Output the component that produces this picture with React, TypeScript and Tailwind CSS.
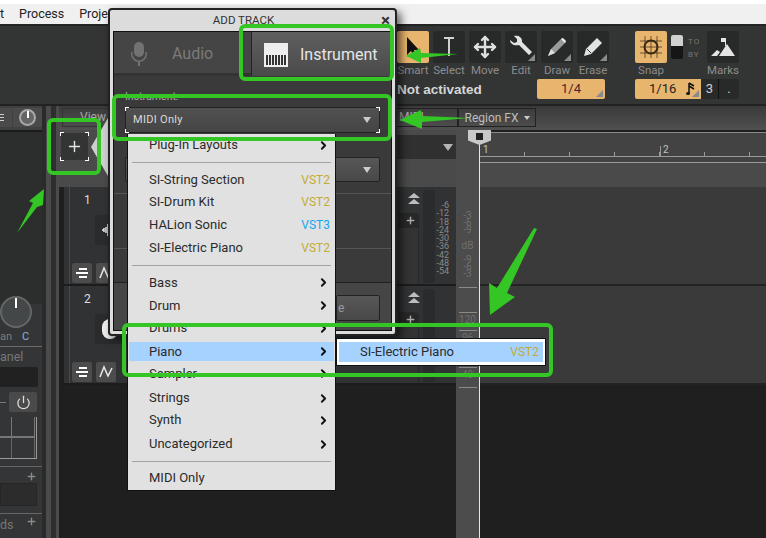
import { ChevronRight, Move, Plus, Power } from 'lucide-react';

const toolButtons = [
  { label: 'Select', icon: <svg width="18" height="24" viewBox="0 0 18 24"><path d="M4 3h10M9 3v18" stroke="#d0d0d0" strokeWidth="2" fill="none" /></svg> },
  { label: 'Move', icon: <Move size={24} color="#e0e0e0" strokeWidth={2.4} /> },
  {
    label: 'Edit',
    icon: <svg width="26" height="26" viewBox="0 0 26 26"><path d="M2 6l4 3 3-1 0-3-3-3c4-1 8 1 8 5l0 1 10 10-3 3-10-10c-5 1-9-1-9-5z" fill="#e2e2e2" /></svg>,
    corner: true,
  },
  {
    label: 'Draw',
    icon: <svg width="24" height="24" viewBox="0 0 24 24"><path d="M3 21l3-7L17 3l4 4L10 18z" fill="#9a9a9a" /><path d="M16 4l4 4 1-2-3-3z" fill="#eeeeee" /><path d="M3 21l3-7 4 4z" fill="#dddddd" /></svg>,
    corner: true,
  },
  {
    label: 'Erase',
    icon: <svg width="24" height="24" viewBox="0 0 24 24"><path d="M3 21l2-7L16 3l5 5L10 19z" fill="#e2e2e2" /><path d="M6 14l4 4" stroke="#333333" strokeWidth="1" /></svg>,
    corner: true,
  },
];

// the heights differ a bit from row to row in the picture
const menuRows = [
  { kind: 'item', text: 'Plug-In Layouts', arrow: true, cls: 'h-[22px]' },
  { kind: 'sep', cls: 'h-[13px]' },
  { kind: 'item', text: 'SI-String Section', tag: 'VST2', cls: 'h-[22px]' },
  { kind: 'item', text: 'SI-Drum Kit', tag: 'VST2', cls: 'h-[22px]' },
  { kind: 'item', text: 'HALion Sonic', tag: 'VST3', cls: 'h-[24px]' },
  { kind: 'item', text: 'SI-Electric Piano', tag: 'VST2', cls: 'h-[22px]' },
  { kind: 'sep', cls: 'h-[12px]' },
  { kind: 'item', text: 'Bass', arrow: true, cls: 'h-[23px]' },
  { kind: 'item', text: 'Drum', arrow: true, cls: 'h-[23px]' },
  { kind: 'item', text: 'Drums', arrow: true, cls: 'h-[22px]' },
  { kind: 'item', text: 'Piano', arrow: true, active: true, cls: 'h-[19px] my-[3px]' },
  { kind: 'item', text: 'Sampler', arrow: true, cls: 'h-[19px] mb-[3px]' },
  { kind: 'item', text: 'Strings', arrow: true, cls: 'h-[24px]' },
  { kind: 'item', text: 'Synth', arrow: true, cls: 'h-[20px]' },
  { kind: 'item', text: 'Uncategorized', arrow: true, cls: 'h-[28px]' },
  { kind: 'sep', cls: 'h-[7px]' },
  { kind: 'item', text: 'MIDI Only', cls: 'h-[26px]' },
];

const dbLabels = ['-6', '-12', '-18', '-24', '-30', '-36', '-42', '-48', '-54'];

function Corner() {
  return <span className="absolute right-[2px] bottom-[2px] w-0 h-0 border-l-[7px] border-l-transparent border-b-[7px] border-b-[#8a8a8a]" />;
}

function Brackets() {
  return (
    <>
      <span className="absolute -left-px -top-px w-[4px] h-[4px] border-l border-t border-white" />
      <span className="absolute -right-px -top-px w-[4px] h-[4px] border-r border-t border-white" />
      <span className="absolute -left-px -bottom-px w-[4px] h-[4px] border-l border-b border-white" />
      <span className="absolute -right-px -bottom-px w-[4px] h-[4px] border-r border-b border-white" />
    </>
  );
}

function Toolbar() {
  return (
    <div className="h-[82px] shrink-0 bg-[#333434] border-t-2 border-b-2 border-t-[#232323] border-b-[#222222] pl-[397px] pt-[5px] flex font-['Roboto',sans-serif]">
      <div className="flex flex-col w-[212px]">
        <div className="flex gap-[4px]">
          <div className="flex flex-col items-center w-[32px]">
            <div className="w-[32px] h-[32px] rounded-[2px] bg-[#e8b56e] flex items-center justify-center">
              <svg width="16" height="22" viewBox="0 0 16 22"><path d="M2 1v18l4-4 3 6 3-1-3-6h5z" fill="#111111" /></svg>
            </div>
            <span className="text-[11.500px] leading-[14px] mb-[1px] text-[#8d8d8d]">Smart</span>
          </div>
          {toolButtons.map((t) => (
            <div key={t.label} className="flex flex-col items-center w-[32px]">
              <div className="relative w-[32px] h-[32px] rounded-[2px] bg-[#282a2a] flex items-center justify-center">
                {t.icon}
                {t.corner && <Corner />}
              </div>
              <span className="text-[11.500px] leading-[14px] mb-[1px] text-[#8d8d8d]">{t.label}</span>
            </div>
          ))}
        </div>
        <div className="flex items-center mt-[1px] h-[20px]">
          <span className="w-[140px] pt-[2px] text-[13.500px] font-bold text-[#d6d6d6] font-['Liberation_Sans',sans-serif]">Not activated</span>
          <div className="relative w-[68px] h-[20px] rounded-[2px] bg-[#e8b56e] flex items-center justify-center text-[13px] text-[#4a1f30]">
            1/4
            <Corner />
          </div>
        </div>
      </div>
      <div className="flex flex-col ml-[26px] w-[104px]">
        <div className="flex">
          <div className="flex flex-col items-center w-[32px]">
            <div className="w-[32px] h-[32px] rounded-[2px] bg-[#e8b56e] flex items-center justify-center">
              <svg width="24" height="24" viewBox="0 0 24 24" fill="none" stroke="#3a2a15" strokeWidth="1">
                <path d="M1 6h22M1 12h22M1 18h22M6 1v22M12 1v22M18 1v22" opacity=".7" />
                <circle cx="12" cy="12" r="6.500" strokeWidth="2" />
              </svg>
            </div>
            <span className="text-[11.500px] leading-[14px] mb-[1px] text-[#8d8d8d]">Snap</span>
          </div>
          <div className="ml-[4px] w-[12px] h-[24px] mt-[4px] rounded-[2px] bg-[#161616]">
            <div className="h-[11px] rounded-t-[2px] bg-[#d0d0d0]" />
          </div>
          <div className="ml-[5px] flex flex-col text-[8px] leading-[13px] mt-[4px] tracking-[1px] text-[#777777]">
            <span>TO</span>
            <span>BY</span>
          </div>
          <div className="flex flex-col items-center w-[32px] ml-auto">
            <div className="w-[32px] h-[32px] rounded-[2px] bg-[#282a2a] flex items-center justify-center">
              <svg width="26" height="24" viewBox="0 0 26 24"><path d="M1 21l6-6 3 2-3 4zM9 21l8-12 8 12zM15 11V3h1v8zM11 3h4v4h-4z" fill="#e4e4e4" /></svg>
            </div>
            <span className="text-[11.500px] leading-[14px] mb-[1px] text-[#8d8d8d]">Marks</span>
          </div>
        </div>
        <div className="flex mt-[1px] h-[20px]">
          <div className="relative w-[66px] rounded-l-[2px] bg-[#e8b56e] flex items-center pl-[14px] gap-[10px] text-[13px] text-[#222222]">
            1/16
            <svg width="10" height="14" viewBox="0 0 10 14"><path d="M3 1v10.500M3 1l5 3M3 4l5 3" stroke="#111111" strokeWidth="1.500" fill="none" /><ellipse cx="2" cy="11.500" rx="2" ry="1.500" fill="#111111" /></svg>
            <Corner />
          </div>
          <div className="w-[18px] bg-[#282a2a] border-r border-[#111111] flex items-center justify-center text-[13px] text-[#d0d0d0]">3</div>
          <div className="w-[20px] rounded-r-[2px] bg-[#282a2a] flex items-center justify-center text-[13px] text-[#d0d0d0]">.</div>
        </div>
      </div>
    </div>
  );
}

function LeftPanel() {
  return (
    <div className="w-[42px] shrink-0 bg-[#333536] flex flex-col text-[#7c7c7c] font-['Roboto',sans-serif]">
      <div className="relative z-10 h-[24px] shrink-0 bg-[#3f4040] flex pt-[2px] gap-px">
        <div className="w-[15px] h-[19px] bg-[#4a4a4a] flex flex-col justify-center gap-[2px]">
          <span className="h-px w-[4px] bg-[#cccccc]" />
          <span className="h-px w-[4px] bg-[#cccccc]" />
          <span className="h-px w-[4px] bg-[#cccccc]" />
        </div>
        <div className="w-[29px] h-[19px] shrink-0 bg-[#4a4a4a] flex items-center justify-center">
          <span className="w-[17px] h-[17px] rounded-full border-2 border-[#a8a8a8] bg-[#666666] flex justify-center">
            <span className="w-[2px] h-[7px] bg-white" />
          </span>
        </div>
      </div>
      <div className="h-[2px] bg-[#1a1a1a]" />
      <div className="flex-1 flex flex-col">
        <div className="h-[172px] shrink-0 bg-[#2c2e2e]" />
        <div className="relative h-[43px] shrink-0 border-b border-[#6a6a6a]">
          <div className="absolute left-0 -top-[8px] w-[32px] h-[32px] rounded-full border-2 border-[#666666] bg-[#444748] flex justify-center">
            <span className="w-[2px] h-[10px] bg-white" />
          </div>
          <span className="absolute left-0 top-[27px] text-[11px] leading-[12px]">an</span>
          <span className="absolute left-[22px] top-[27px] text-[11px] leading-[12px] text-[#8fb0d8]">C</span>
        </div>
        <div className="h-[20px] text-[12.500px] leading-[20px] text-[#777777]">anel</div>
        <div className="h-[20px] mr-[4px] rounded-r-[2px] bg-[#212121]" />
        <div className="flex items-center h-[27px] pt-[3px]">
          <span className="w-[6px] h-px bg-[#777777]" />
          <span className="ml-[3px] w-[28px] h-[20px] rounded-[2px] bg-[#4a4a4a] flex items-center justify-center">
            <Power size={15} color="#dddddd" strokeWidth={2} />
          </span>
        </div>
        <div className="h-[42px] mr-[5px] mt-[3px] border-b border-r border-[#9a9a9a] bg-[#333536] grid grid-cols-[12px_23px] grid-rows-2">
          <span className="border-r border-b-2 border-[#777777]" />
          <span className="border-r border-b-2 border-[#777777]" />
          <span className="border-r border-[#666666]" />
          <span className="border-r border-[#666666]" />
        </div>
        <div className="mt-[7px] h-[47px] border-t border-[#666666] relative">
          <Plus size={11} color="#8a8a8a" strokeWidth={3} className="absolute right-[5px] top-[4px]" />
          <div className="absolute left-0 right-[5px] top-[16px] h-[23px] border border-[#262626] bg-[#2c2c2c]" />
        </div>
        <div className="border-t border-[#666666] relative flex-1">
          <span className="absolute left-0 top-[3px] text-[12.500px] leading-[16px] text-[#777777]">ds</span>
          <Plus size={11} color="#8a8a8a" strokeWidth={3} className="absolute right-[5px] top-[2px]" />
        </div>
      </div>
    </div>
  );
}

function TrackRow({ n, waveform }: { n: number; waveform?: boolean }) {
  return (
    <div className="relative h-[99px] shrink-0 bg-[#303233] border-b-2 border-[#1c1c1c] ml-[3px] border-l-[2px] border-l-[#1f1f1f]">
      <span className="absolute left-[5px] top-0 bottom-0 w-px bg-[#4a4a4a]" />
      <span className="absolute left-[20px] top-[4px] text-[12px] text-[#dddddd] font-['Roboto',sans-serif]">{n}</span>
      <div className="absolute left-[31px] top-[28px] w-[28px] h-[30px] bg-[#2a2b2c] flex items-center pl-[6px]">
        {waveform ? (
          <svg width="14" height="20" viewBox="0 0 14 20"><path d="M1 10h2M3 8v4M5 7v6M7 4v12M9 2v16M11 5v10M13 7v6" stroke="#e8e8e8" strokeWidth="1.500" /></svg>
        ) : (
          <span className="ml-[1px] w-[16px] h-[20px] rounded-full bg-[#eeeeee]" />
        )}
      </div>
      <div className="absolute left-[8px] top-[76px] w-[20px] h-[20px] rounded-[2px] bg-[#4c4c4c] flex flex-col items-center justify-center gap-[2px]">
        <span className="w-[8px] h-[2px] bg-white ml-[2px]" />
        <span className="w-[12px] h-[2px] bg-white" />
        <span className="w-[8px] h-[2px] bg-white ml-[2px]" />
      </div>
      <div className="absolute left-[32px] top-[76px] w-[20px] h-[20px] rounded-[2px] bg-[#4c4c4c] flex items-center justify-center">
        <svg width="14" height="14" viewBox="0 0 14 14"><path d="M1 12L5 2l4 9 4-8" stroke="#e8e8e8" strokeWidth="1.500" fill="none" /></svg>
      </div>
      <div className="absolute left-[342px] top-[6px] w-[16px] flex flex-col items-center gap-[1px]">
        <span className="w-0 h-0 border-x-[6px] border-x-transparent border-b-[5px] border-b-[#bdbdbd]" />
        <span className="w-0 h-0 border-x-[6px] border-x-transparent border-b-[5px] border-b-[#bdbdbd]" />
      </div>
      <div className="absolute left-[335px] top-[26px] w-[20px] h-[71px] rounded-t-[4px] border-r border-[#282828] bg-[#333333]">
        <div className="h-[15px] rounded-tr-[4px] bg-[#282828] flex justify-end items-center pr-[2px]">
          <Plus size={11} color="#aaaaaa" strokeWidth={3} />
        </div>
      </div>
      <div className="absolute left-[359px] top-[3px] w-[12px] h-[93px] rounded-[3px] bg-[#2a2b2c]" />
      {waveform && (
        <div className="absolute left-[371px] top-[14px] w-[14px] flex flex-col items-end text-[9px] leading-[8.250px] text-[#8a8a8a] font-['Roboto',sans-serif]">
          {dbLabels.map((d) => <span key={d}>{d}</span>)}
        </div>
      )}
    </div>
  );
}

function TrackColumn() {
  return (
    <div className="relative w-[398px] shrink-0 bg-[#1f1f1f] flex flex-col">
      <div className="h-[57px] shrink-0 bg-[#4a4a4a] flex justify-end items-start pt-[5px]">
        <div className="w-[60px] h-[24px] bg-[#303030] flex items-center justify-end pr-[4px]">
          <span className="w-0 h-0 border-x-[5px] border-x-transparent border-t-[7px] border-t-[#b4b4b4]" />
        </div>
      </div>
      <TrackRow n={1} waveform />
      <TrackRow n={2} />
    </div>
  );
}

function DbStrip() {
  return (
    <div className="w-[23px] shrink-0 bg-[#4c4c4c] flex flex-col items-center text-[10px] text-[#6f6f6f] font-['Roboto',sans-serif]">
      <div className="h-[82px] shrink-0" />
      <div className="flex flex-col items-center leading-[7px]">
        <span>-3</span>
        <span>-6</span>
        <span>-9</span>
        <span className="mt-[8px] mb-[6px] text-[10px] leading-[9px]">dB</span>
        <span>-9</span>
        <span>-6</span>
        <span>-3</span>
      </div>
      <div className="w-[18px] h-px bg-[#8a8a8a] mt-[10px] shrink-0" />
      <span className="mt-[24px] w-[18px] border-t border-[#8a8a8a] text-[10px] leading-[14px] text-center">120</span>
      <span className="mt-[3px] w-[18px] border-t border-[#8a8a8a] text-[10px] leading-[14px] text-center">96</span>
      <span className="mt-[22px] w-[18px] border-t border-[#8a8a8a] text-[10px] leading-[14px] text-center">48</span>
      <div className="w-[18px] h-px bg-[#8a8a8a] mt-[5px] shrink-0" />
    </div>
  );
}

function Timeline() {
  return (
    <div className="relative flex-1 flex flex-col bg-[#1f1f1f] border-l border-[#e6e6e6]">
      <div className="relative h-[31px] shrink-0 bg-[#434343] border-t border-[#8a8a8a] mt-[2px] border-b border-b-[#9a9a9a]">
        <div className="absolute left-0 right-0 bottom-[5px] h-[12px] border-b border-[#9a9a9a] flex items-end overflow-hidden">
          {[...Array(7)].map((_, i) => (
            <span key={i} className="w-[45px] h-[4px] border-r border-[#9a9a9a] shrink-0" />
          ))}
        </div>
        <span className="absolute left-[3px] top-[11px] text-[10px] leading-[12px] text-[#c4c4c4] font-['Roboto',sans-serif]">1</span>
        <span className="absolute left-[180px] top-[13px] h-[11px] w-px bg-[#9a9a9a]" />
        <span className="absolute left-[183px] top-[11px] text-[10px] leading-[12px] text-[#c4c4c4] font-['Roboto',sans-serif]">2</span>
      </div>
      <div className="h-[24px] shrink-0 bg-[#4a4a4a]" />
      <div className="h-[99px] shrink-0 bg-[#3a3a3a] border-b-2 border-[#232323]" />
      <div className="h-[99px] shrink-0 bg-[#3a3a3a] border-b-2 border-[#232323]" />
    </div>
  );
}

function AddTrackDialog() {
  return (
    <div className="absolute left-[108px] top-[8px] w-[289px] h-[328px] rounded-[4px] border-2 border-[#222222] bg-[#dcdcdc] shadow-[4px_4px_8px_rgba(0,0,0,0.6)] flex flex-col font-['Roboto',sans-serif]">
      <div className="relative h-[21px] shrink-0 flex items-center justify-center pr-[18px] text-[11.500px] text-[#333333]">
        ADD TRACK
        <span className="absolute right-[5px] top-[1px] text-[17px] leading-[18px] font-bold text-[#333333]">×</span>
      </div>
      <div className="mx-[3px] mb-[3px] flex-1 border border-[#111111] bg-[#3a3a3a] flex flex-col">
        <div className="h-[44px] shrink-0 flex bg-[#444444]">
          <div className="w-[138px] pt-[2px] border-r border-[#222222] bg-[#454545] border-b-[3px] border-b-[#333333] flex items-center pl-[15px]">
            <svg width="20" height="26" viewBox="0 0 20 26" fill="#727272">
              <rect x="5" y="1" width="10" height="15" rx="5" />
              <path d="M2 11v2a8 8 0 0 0 16 0v-2h-1.500v2a6.500 6.500 0 0 1-13 0v-2zM9 21h2v4H9z" />
            </svg>
            <span className="ml-[23px] text-[16px] text-[#7a7a7a]">Audio</span>
          </div>
          <div className="flex-1 pt-[2px] bg-gradient-to-b from-[#5f5f5f] to-[#4a4a4a] flex items-center pl-[12px]">
            <div className="relative w-[24px] h-[24px] bg-[#eeeeee] flex items-end justify-center gap-px pb-[2px]">
              {[...Array(7)].map((_, i) => (
                <span key={i} className="w-[2px] h-[10px] bg-[#333333]" />
              ))}
            </div>
            <span className="ml-[12px] text-[16px] text-[#e6e6e6]">Instrument</span>
          </div>
        </div>
        <div className="px-[11px] pt-[15px] h-[74px] shrink-0">
          <div className="text-[10.500px] leading-[12px] text-[#aaaaaa]">Instrument:</div>
          <div className="relative mt-[4px] h-[26px] border border-[#222222] bg-gradient-to-b from-[#515151] to-[#454545] flex items-center justify-between pl-[7px] pr-[8px] text-[11px] tracking-[0.3px] text-[#dadada]">
            MIDI Only
            <span className="w-0 h-0 border-x-[4px] border-x-transparent border-t-[6px] border-t-[#cccccc]" />
            <Brackets />
          </div>
        </div>
        <div className="mx-[11px] mt-[7px] h-[25px] shrink-0 rounded-[2px] border border-[#222222] bg-gradient-to-b from-[#575757] to-[#484848] flex items-center justify-end pr-[8px]">
          <span className="w-0 h-0 border-x-[4px] border-x-transparent border-t-[6px] border-t-[#cccccc]" />
        </div>
        <div className="mt-[11px] h-[55px] shrink-0 border-t border-[#555555]" />
        <div className="h-[34px] shrink-0 border-t border-[#555555]" />
        <div className="flex-1 bg-[#464646] border-t border-[#222222] flex justify-end items-start pt-[12px] pr-[11px]">
          <div className="w-[44px] h-[26px] rounded-[2px] border border-[#222222] bg-gradient-to-b from-[#585858] to-[#484848] flex items-center text-[12px] text-[#999999] overflow-hidden pl-[1px]">e</div>
        </div>
      </div>
    </div>
  );
}

function Tag({ value }: { value: string }) {
  const color = value === 'VST3' ? 'text-[#12a8f0]' : 'text-[#c3ab35]';
  return <span className={`${color} text-[12px]`}>{value}</span>;
}

function PluginMenu() {
  return (
    <div className="absolute left-[127px] top-[134px] w-[209px] h-[357px] bg-[#e1e1e1] border-l border-r border-b border-[#111111] flex flex-col text-[13px] text-[#2b2b2b] font-['Roboto',sans-serif]">
      {menuRows.map((row, i) =>
        row.kind === 'sep' ? (
          <div key={i} className={`${row.cls} flex items-center px-[4px] shrink-0`}>
            <span className="w-full h-px bg-[#a2a2a2]" />
          </div>
        ) : (
          <div key={i} className={`${row.cls} shrink-0 flex items-center pl-[20px] pr-[4px] mx-px ${row.active ? 'bg-[#a6d2ff]' : ''}`}>
            <span className="flex-1">{row.text}</span>
            {row.tag && <Tag value={row.tag} />}
            {row.arrow && <ChevronRight size={13} color="#111111" strokeWidth={3.500} />}
          </div>
        )
      )}
    </div>
  );
}

function PianoSubmenu() {
  return (
    <div className="absolute left-[336px] top-[338px] w-[210px] h-[28px] border border-[#111111] bg-white p-[3px_2px] text-[13px] text-[#2b2b2b] font-['Roboto',sans-serif]">
      <div className="h-full bg-[#a6d2ff] flex items-center justify-between pl-[21px] pr-[4px]">
        <span>SI-Electric Piano</span>
        <Tag value="VST2" />
      </div>
    </div>
  );
}

function Annotations() {
  return (
    <>
      <div className="absolute left-[239px] top-[24px] w-[155px] h-[57px] rounded-[6px] border-[4px] border-[#33c624]" />
      <div className="absolute left-[112px] top-[94px] w-[280px] h-[47px] rounded-[6px] border-[4px] border-[#33c624]" />
      <div className="absolute left-[47px] top-[118px] w-[54px] h-[57px] rounded-[6px] border-[4px] border-[#33c624]" />
      <div className="absolute left-[122px] top-[323px] w-[431px] h-[54px] rounded-[6px] border-[4px] border-[#33c624]" />
      <svg className="absolute left-0 top-0" width="766" height="538" viewBox="0 0 766 538" fill="#33c624">
        <path d="M406 56l14-8 1 5 37 1-37 4 0 5z" />
        <path d="M400 120l21-10 1 6 48 2-48 4 0 7z" />
        <path d="M44 189L29 201l4 2L17 233l20-26 6-2z" />
        <path d="M534 228l3 1-30 64 8 4-25 18-1-32 8 5z" />
      </svg>
    </>
  );
}

export default function App() {
  return (
    <div className="relative w-[766px] h-[538px] overflow-hidden bg-[#1f1f1f] flex flex-col">
      <div className="h-[24px] shrink-0 bg-[#f0f0f0] border-t-4 border-white flex items-center gap-[15px] text-[12.500px] text-[#222222] font-['Roboto',sans-serif]">
        <span className="w-[4px] text-right">t</span>
        <span>Process</span>
        <span>Proje</span>
      </div>
      <Toolbar />
      <div className="flex-1 flex min-h-0">
        <LeftPanel />
        <div className="w-[14px] shrink-0 bg-[#2a2a2a] flex pl-[4px]">
          <span className="w-[5px] bg-[#4b4b4b]" />
          <span className="w-[5px] bg-[#2e2e2e]" />
        </div>
        <div className="w-[3px] shrink-0 bg-[#4b4b4b]" />
        <div className="flex-1 flex flex-col min-w-0">
          <div className="h-[24px] shrink-0 bg-gradient-to-b from-[#3a3a3a] to-[#505050] flex pt-[2px] font-['Roboto',sans-serif] text-[12px] text-[#a8a8a8]">
            <div className="w-[50px] h-[19px] ml-[3px] border border-[#333333] pl-[17px] leading-[17px]">View</div>
            <div className="w-[62px] h-[19px] ml-auto border border-[#222222] pl-[2px] leading-[17px]">MIDI</div>
            <div className="w-[78px] h-[19px] mr-[230px] border border-[#222222] flex items-center justify-center gap-[5px] text-[#bdbdbd]">
              Region FX
              <span className="w-0 h-0 border-x-[3px] border-x-transparent border-t-[4px] border-t-[#cccccc]" />
            </div>
          </div>
          <div className="flex-1 flex min-h-0">
            <div className="w-[397px] shrink-0 overflow-hidden flex flex-col">
              <TrackColumn />
            </div>
            <DbStrip />
            <Timeline />
          </div>
        </div>
      </div>

      <div className="absolute left-[61px] top-[133px] w-[27px] h-[27px] bg-[#333535] flex items-center justify-center">
        <Plus size={17} color="#e4e4e4" strokeWidth={2} />
        <Brackets />
      </div>
      <svg className="absolute left-[88px] top-[118px]" width="22" height="58" viewBox="0 0 22 58">
        <path d="M20 0L3 29l17 29z" fill="#cfcfcf" />
      </svg>

      <div className="absolute left-[468px] top-[130px] w-[23px] h-[15px] bg-[#c9c9c9] flex justify-center pt-[3px] [clip-path:polygon(0_0,100%_0,100%_70%,50%_100%,0_70%)]">
        <span className="w-[7px] h-[7px] bg-[#222222]" />
      </div>

      <AddTrackDialog />
      <PluginMenu />
      <PianoSubmenu />
      <Annotations />
    </div>
  );
}
